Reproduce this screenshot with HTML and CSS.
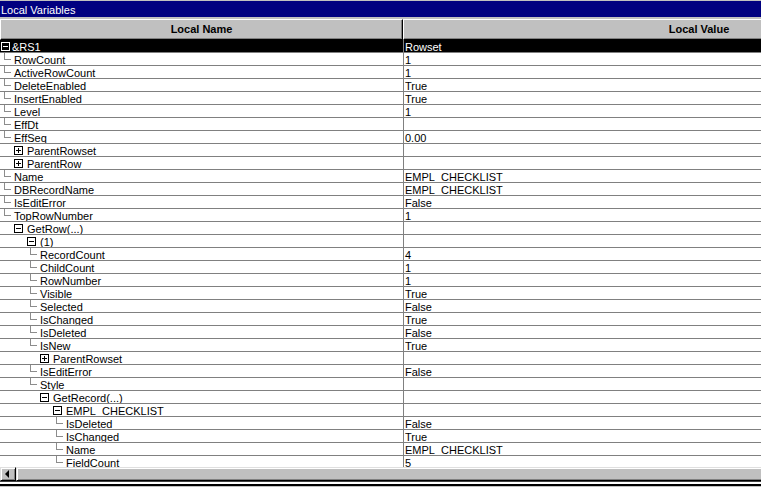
FILE: index.html
```html
<!DOCTYPE html>
<html>
<head>
<meta charset="utf-8">
<title>Local Variables</title>
<link rel="stylesheet" href="styles.css">
</head>
<body>
<div class="win">
  <div class="title">Local Variables</div>
  <div class="sep"></div>
  <div class="hdr">
    <div class="hb hn">Local Name</div>
    <div class="hb hv">Local Value</div>
  </div>
  <div class="rows">
    <div class="r sel"><div class="n k0"><i class="bx"></i><span>&amp;RS1</span></div><div class="v">Rowset</div></div>
    <div class="r"><div class="n f1"><i class="lf"></i><span>RowCount</span></div><div class="v">1</div></div>
    <div class="r"><div class="n f1"><i class="lf"></i><span>ActiveRowCount</span></div><div class="v">1</div></div>
    <div class="r"><div class="n f1"><i class="lf"></i><span>DeleteEnabled</span></div><div class="v">True</div></div>
    <div class="r"><div class="n f1"><i class="lf"></i><span>InsertEnabled</span></div><div class="v">True</div></div>
    <div class="r"><div class="n f1"><i class="lf"></i><span>Level</span></div><div class="v">1</div></div>
    <div class="r"><div class="n f1"><i class="lf"></i><span>EffDt</span></div><div class="v"></div></div>
    <div class="r"><div class="n f1"><i class="lf"></i><span>EffSeq</span></div><div class="v">0.00</div></div>
    <div class="r"><div class="n k1"><i class="bx pl"></i><span>ParentRowset</span></div><div class="v"></div></div>
    <div class="r"><div class="n k1"><i class="bx pl"></i><span>ParentRow</span></div><div class="v"></div></div>
    <div class="r"><div class="n f1"><i class="lf"></i><span>Name</span></div><div class="v">EMPL_CHECKLIST</div></div>
    <div class="r"><div class="n f1"><i class="lf"></i><span>DBRecordName</span></div><div class="v">EMPL_CHECKLIST</div></div>
    <div class="r"><div class="n f1"><i class="lf"></i><span>IsEditError</span></div><div class="v">False</div></div>
    <div class="r"><div class="n f1"><i class="lf"></i><span>TopRowNumber</span></div><div class="v">1</div></div>
    <div class="r"><div class="n k1"><i class="bx"></i><span>GetRow(...)</span></div><div class="v"></div></div>
    <div class="r"><div class="n k2"><i class="bx"></i><span>(1)</span></div><div class="v"></div></div>
    <div class="r"><div class="n f3"><i class="lf"></i><span>RecordCount</span></div><div class="v">4</div></div>
    <div class="r"><div class="n f3"><i class="lf"></i><span>ChildCount</span></div><div class="v">1</div></div>
    <div class="r"><div class="n f3"><i class="lf"></i><span>RowNumber</span></div><div class="v">1</div></div>
    <div class="r"><div class="n f3"><i class="lf"></i><span>Visible</span></div><div class="v">True</div></div>
    <div class="r"><div class="n f3"><i class="lf"></i><span>Selected</span></div><div class="v">False</div></div>
    <div class="r"><div class="n f3"><i class="lf"></i><span>IsChanged</span></div><div class="v">True</div></div>
    <div class="r"><div class="n f3"><i class="lf"></i><span>IsDeleted</span></div><div class="v">False</div></div>
    <div class="r"><div class="n f3"><i class="lf"></i><span>IsNew</span></div><div class="v">True</div></div>
    <div class="r"><div class="n k3"><i class="bx pl"></i><span>ParentRowset</span></div><div class="v"></div></div>
    <div class="r"><div class="n f3"><i class="lf"></i><span>IsEditError</span></div><div class="v">False</div></div>
    <div class="r"><div class="n f3"><i class="lf"></i><span>Style</span></div><div class="v"></div></div>
    <div class="r"><div class="n k3"><i class="bx"></i><span>GetRecord(...)</span></div><div class="v"></div></div>
    <div class="r"><div class="n k4"><i class="bx"></i><span>EMPL_CHECKLIST</span></div><div class="v"></div></div>
    <div class="r"><div class="n f5"><i class="lf"></i><span>IsDeleted</span></div><div class="v">False</div></div>
    <div class="r"><div class="n f5"><i class="lf"></i><span>IsChanged</span></div><div class="v">True</div></div>
    <div class="r"><div class="n f5"><i class="lf"></i><span>Name</span></div><div class="v">EMPL_CHECKLIST</div></div>
    <div class="r"><div class="n f5"><i class="lf"></i><span>FieldCount</span></div><div class="v">5</div></div>
  </div>
  <div class="hs">
    <div class="arr"><i class="tri"></i></div>
    <div class="thumb"></div>
  </div>
  <div class="bot"></div>
</div>
</body>
</html>
```
FILE: styles.css
```css
* { box-sizing: border-box; margin: 0; padding: 0; }
html, body { width: 761px; height: 488px; overflow: hidden; background: #c0c0c0; }
body { font-family: "Liberation Sans", Arial, sans-serif; font-size: 11px; color: #000; }

.win { width: 761px; height: 488px; display: flex; flex-direction: column; overflow: hidden; }

.title { flex: none; height: 17px; border-top: 1px solid #c0c0c0; background: #000080; color: #fff; line-height: 14px; padding: 2px 0 0 1px; white-space: nowrap; }
.sep { flex: none; height: 2px; background: #c0c0c0; }

.hdr { flex: none; height: 21px; display: flex; background: #c0c0c0; overflow: hidden; }
.hb { flex: none; height: 21px; border-top: 1px solid #fff; border-left: 1px solid #fff; border-right: 1px solid #000; border-bottom: 1px solid #000; box-shadow: inset -1px -1px 0 #808080; font-weight: bold; text-align: center; line-height: 18px; white-space: nowrap; }
.hn { width: 403px; }
.hv { width: 592px; }

.rows { flex: none; height: 427px; background: #fff; overflow: hidden; }
.r { height: 13px; display: flex; border-bottom: 1px solid #808080; }
.n, .v { flex: none; height: 12px; overflow: hidden; line-height: 10px; padding-top: 2px; white-space: nowrap; }
.n { width: 404px; border-right: 1px solid #808080; display: flex; align-items: flex-start; }
.v { width: 600px; padding-left: 1px; }

.sel { background: #000; color: #fff; }

.lf { flex: none; display: block; width: 7px; height: 7px; margin: -2px 3px 0 0; border-left: 1px solid #8c8c8c; border-bottom: 1px solid #8c8c8c; }
.bx { flex: none; display: block; position: relative; width: 9px; height: 9px; margin: 0 4px 0 0; border: 1px solid #000; }
.bx::before { content: ""; position: absolute; left: 1px; top: 3px; width: 5px; height: 1px; background: #000; }
.bx.pl::after { content: ""; position: absolute; left: 3px; top: 1px; width: 1px; height: 5px; background: #000; }
.sel .bx { border-color: #fff; }
.sel .bx::before { background: #fff; }

.k0 { padding-left: 1px; }
.k0 .bx { margin-right: 2px; }
.k1 { padding-left: 14px; }
.k2 { padding-left: 27px; }
.k3 { padding-left: 40px; }
.k4 { padding-left: 53px; }
.f1 { padding-left: 4px; }
.f3 { padding-left: 30px; }
.f5 { padding-left: 56px; }

.hs { flex: none; height: 14px; display: flex; background: #c0c0c0; }
.arr { flex: none; width: 16px; height: 14px; border-top: 1px solid #dfdfdf; border-left: 1px solid #dfdfdf; border-right: 1px solid #000; border-bottom: 1px solid #000; box-shadow: inset 1px 1px 0 #fff, inset -1px -1px 0 #808080; display: flex; align-items: center; justify-content: center; }
.tri { display: block; width: 0; height: 0; border-right: 4px solid #000; border-top: 4px solid transparent; border-bottom: 4px solid transparent; margin-left: -2px; }
.thumb { flex: 1; height: 14px; border-top: 1px solid #dfdfdf; border-left: 1px solid #dfdfdf; border-bottom: 1px solid #000; box-shadow: inset 1px 1px 0 #fff, inset 0 -1px 0 #808080; }

.bot { flex: none; height: 7px; background: linear-gradient(#404040 0 1px, #fff 1px 3px, #000 3px 5px, #c0c0c0 5px 6px, #fff 6px 7px); }
```
